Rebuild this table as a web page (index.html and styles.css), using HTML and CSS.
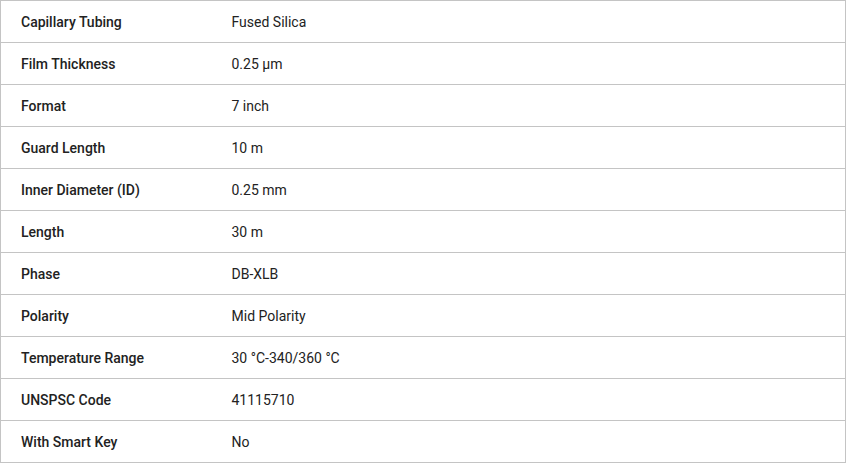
FILE: index.html
```html
<!DOCTYPE html>
<html>
<head>
<meta charset="utf-8">
<link rel="stylesheet" href="styles.css">
</head>
<body>
<table class="specs">
  <tbody>
    <tr><th>Capillary Tubing</th><td>Fused Silica</td></tr>
    <tr><th>Film Thickness</th><td>0.25 µm</td></tr>
    <tr><th>Format</th><td>7 inch</td></tr>
    <tr><th>Guard Length</th><td>10 m</td></tr>
    <tr><th>Inner Diameter (ID)</th><td>0.25 mm</td></tr>
    <tr><th>Length</th><td>30 m</td></tr>
    <tr><th>Phase</th><td>DB-XLB</td></tr>
    <tr><th>Polarity</th><td>Mid Polarity</td></tr>
    <tr><th>Temperature Range</th><td>30 °C-340/360 °C</td></tr>
    <tr><th>UNSPSC Code</th><td>41115710</td></tr>
    <tr><th>With Smart Key</th><td>No</td></tr>
  </tbody>
</table>
</body>
</html>
```
FILE: styles.css
```css
html, body {
  margin: 0;
  padding: 0;
  background: #fff;
}
.specs {
  width: 846px;
  border-collapse: collapse;
  border: 1px solid #c4c4c4;
  font-family: Roboto, "Liberation Sans", sans-serif;
  font-size: 14px;
  color: #222;
}
.specs tr {
  border-top: 1px solid #c4c4c4;
}
.specs th,
.specs td {
  height: 42px;
  padding: 0 20px;
  text-align: left;
  vertical-align: middle;
  box-sizing: border-box;
  line-height: 16px;
}
.specs th {
  width: 211px;
  font-weight: 500;
}
.specs td {
  font-weight: 400;
}
```
